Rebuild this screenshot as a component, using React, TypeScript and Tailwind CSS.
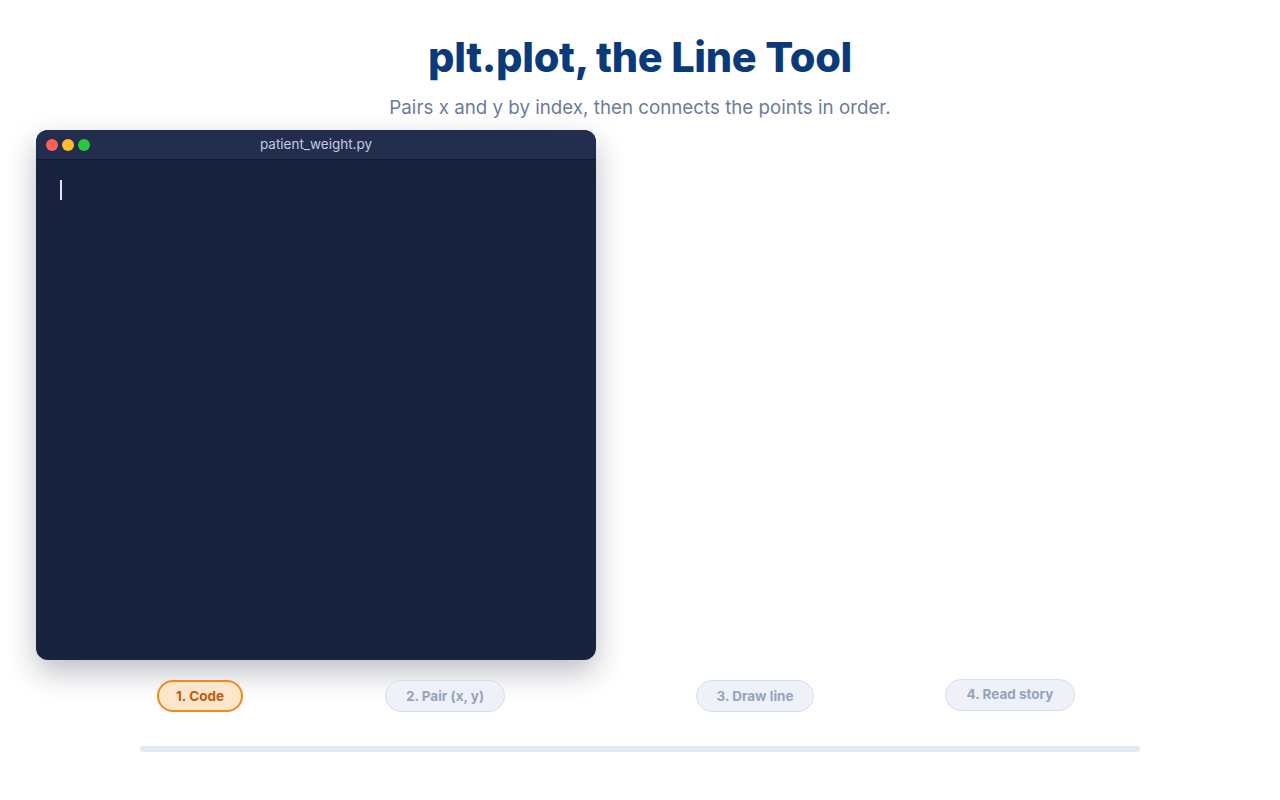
export default function App() {
  const font = { fontFamily: 'Inter, "Noto Sans", sans-serif' }
  return (
    <div className="w-[1280px] h-[800px] bg-white flex flex-col items-center" style={font}>
      <h1 className="mt-[33px] text-[41.5px] leading-[48px] font-extrabold text-[#0b3a7a] tracking-[-0.3px]">
        plt.plot, the Line Tool
      </h1>
      <p className="mt-[14px] text-[18.75px] leading-[26px] text-[#6d7c9b]">
        Pairs x and y by index, then connects the points in order.
      </p>

      <div className="w-full flex mt-[9px] pl-[36px]">
        <div className="w-[560px] h-[530px] rounded-[12px] bg-[#19223e] overflow-hidden shadow-[0_12px_30px_rgba(15,23,42,0.28)] flex flex-col">
          <div className="h-[30px] bg-[#232d4d] border-b border-[#141b33] flex items-center px-[10px] relative">
            <div className="flex gap-[4px]">
              <span className="w-[12px] h-[12px] rounded-full bg-[#fe5f57]" />
              <span className="w-[12px] h-[12px] rounded-full bg-[#febc2e]" />
              <span className="w-[12px] h-[12px] rounded-full bg-[#28c840]" />
            </div>
            <span className="absolute inset-0 flex items-center justify-center text-[13.5px] text-[#c3cbe0]">
              patient_weight.py
            </span>
          </div>
          <div className="flex-1 px-[24px] pt-[20px]">
            <div className="w-[2px] h-[20px] bg-[#dfe6f5]" />
          </div>
        </div>
      </div>

      <div className="w-full flex items-center mt-[20px] pl-[157px] text-[13.5px] font-bold">
        <span className="w-[86px] h-[32px] rounded-full border-2 border-[#f08a1c] bg-[#fde6cc] text-[#c15a0a] flex items-center justify-center">
          1. Code
        </span>
        <span className="ml-[142px] w-[120px] h-[32px] rounded-full border border-[#d6deec] bg-[#eef1f7] text-[#97a3bb] flex items-center justify-center">
          2. Pair (x, y)
        </span>
        <span className="ml-[191px] w-[118px] h-[32px] rounded-full border border-[#d6deec] bg-[#eef1f7] text-[#97a3bb] flex items-center justify-center">
          3. Draw line
        </span>
        <span className="ml-[131px] w-[130px] h-[32px] rounded-full border border-[#d6deec] bg-[#eef1f7] text-[#97a3bb] flex items-center justify-center -mt-[3px]">
          4. Read story
        </span>
      </div>

      <div className="mt-[34px] w-[1000px] h-[6px] rounded-full bg-[#e5e9f3]" />
    </div>
  )
}
